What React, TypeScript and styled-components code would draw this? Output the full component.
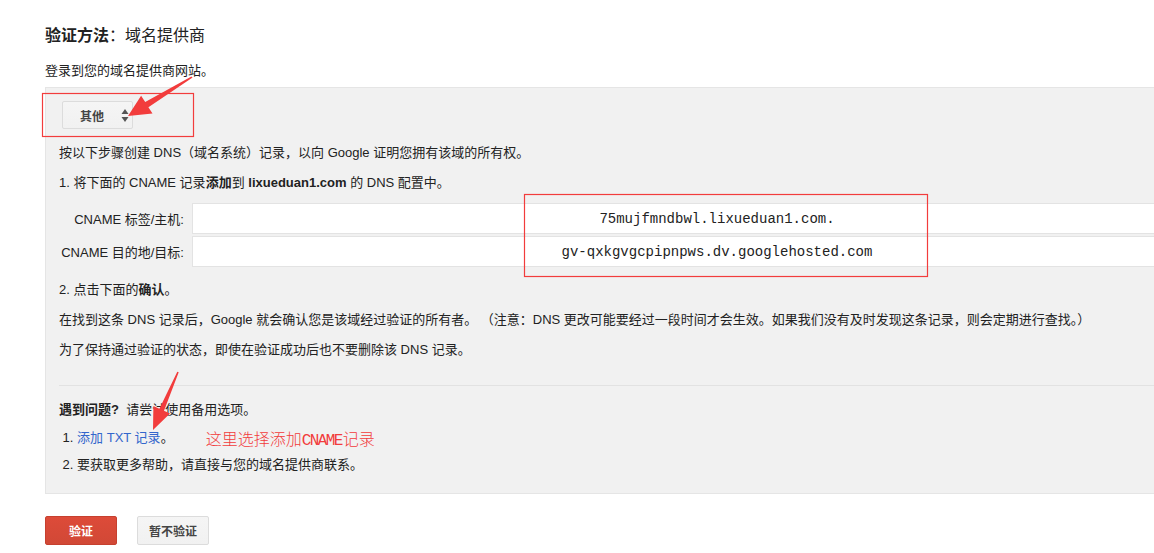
import React from "react";
import styled, { createGlobalStyle } from "styled-components";

const GlobalStyle = createGlobalStyle`
  html, body {
    margin: 0;
    padding: 0;
    background: #fff;
    overflow: hidden;
  }
  body {
    font-family: "Liberation Sans", "Noto Sans CJK SC", Arial, sans-serif;
    color: #222;
    font-size: 13px;
  }
`;

const Page = styled.div`
  position: relative;
  width: 1300px;
  padding: 26px 0 40px 45px;
  box-sizing: border-box;
`;

const Title = styled.h1`
  margin: 0;
  font-size: 16px;
  line-height: 20px;
  font-weight: normal;
  color: #222;
  strong {
    font-weight: bold;
  }
`;

const Text = styled.p<{ $mt: number }>`
  margin: ${(p) => p.$mt}px 0 0 0;
  height: 18px;
  font-size: 13px;
  line-height: 18px;
  color: #222;
  white-space: nowrap;
  b {
    font-weight: bold;
  }
`;

const Panel = styled.div`
  margin-top: 7px;
  width: 1230px;
  box-sizing: border-box;
  background: #f1f1f1;
  border: 1px solid #e5e5e5;
  padding: 13px 13px 19px 13px;
`;

const SelectButton = styled.div`
  margin-left: 3px;
  width: 71px;
  height: 28px;
  box-sizing: border-box;
  display: flex;
  align-items: center;
  padding: 0 0 0 17px;
  gap: 17px;
  border: 1px solid #dcdcdc;
  border-radius: 2px;
  background: linear-gradient(#f5f5f5, #f1f1f1);
  font-size: 12px;
  font-weight: bold;
  color: #444;
`;

const Fields = styled.div`
  margin-top: 11px;
  display: grid;
  grid-template-columns: 125px 1050px;
  column-gap: 8px;
  row-gap: 2px;
`;

const FieldLabel = styled.div`
  height: 31px;
  display: flex;
  align-items: center;
  justify-content: flex-end;
  font-size: 13px;
  white-space: nowrap;
  color: #222;
`;

const FieldValue = styled.div`
  height: 31px;
  box-sizing: border-box;
  border: 1px solid #e3e3e3;
  background: #fff;
  display: flex;
  align-items: center;
  justify-content: center;
  font-family: "Liberation Mono", "Courier New", monospace;
  font-size: 14px;
  color: #222;
`;

const Divider = styled.div`
  margin-top: 26px;
  height: 1px;
  background: #e2e2e2;
`;

const Link = styled.a`
  color: #3366cc;
  text-decoration: none;
`;

const Note = styled.span`
  display: inline-block;
  vertical-align: top;
  height: 18px;
  line-height: 18px;
  margin-left: 32px;
  font-size: 16px;
  color: #f23c3c;
  font-family: "Noto Sans CJK SC", sans-serif;
  font-weight: 300;
`;

const NoteLatin = styled.span`
  font-family: "Liberation Mono", monospace;
  font-size: 16px;
  letter-spacing: -1.6px;
  margin-right: 1px;
`;

const Actions = styled.div`
  margin-top: 22px;
  display: flex;
  gap: 20px;
`;

const Button = styled.button<{ $primary?: boolean }>`
  width: 72px;
  height: 29px;
  box-sizing: border-box;
  border-radius: 2px;
  font-family: "Liberation Sans", "Noto Sans CJK SC", sans-serif;
  font-size: 12px;
  font-weight: bold;
  cursor: pointer;
  padding: 0;
  border: 1px solid ${(p) => (p.$primary ? "#c6402f" : "#dcdcdc")};
  background: ${(p) =>
    p.$primary ? "linear-gradient(#dd4b39, #d14836)" : "linear-gradient(#f5f5f5, #f1f1f1)"};
  color: ${(p) => (p.$primary ? "#fff" : "#444")};
`;

const Overlay = styled.svg`
  position: absolute;
  top: 0;
  left: 0;
  pointer-events: none;
`;

const SelectArrows = () => (
  <svg width="8" height="13" viewBox="0 0 8 13">
    <polygon points="4,0 7.5,5 0.5,5" fill="#555" />
    <polygon points="0.5,8 7.5,8 4,13" fill="#555" />
  </svg>
);

export default function App() {
  return (
    <>
      <GlobalStyle />
      <Page>
        <Title>
          <strong>验证方法</strong>：域名提供商
        </Title>
        <Text $mt={16}>登录到您的域名提供商网站。</Text>
        <Panel>
          <SelectButton>
            <span>其他</span>
            <SelectArrows />
          </SelectButton>
          <Text $mt={15}>
            按以下步骤创建 DNS（域名系统）记录，以向 Google 证明您拥有该域的所有权。
          </Text>
          <Text $mt={12}>
            1. 将下面的 CNAME 记录<b>添加</b>到 <b>lixueduan1.com</b> 的 DNS 配置中。
          </Text>
          <Fields>
            <FieldLabel>CNAME 标签/主机:</FieldLabel>
            <FieldValue>75mujfmndbwl.lixueduan1.com.</FieldValue>
            <FieldLabel>CNAME 目的地/目标:</FieldLabel>
            <FieldValue>gv-qxkgvgcpipnpws.dv.googlehosted.com</FieldValue>
          </Fields>
          <Text $mt={14}>
            2. 点击下面的<b>确认</b>。
          </Text>
          <Text $mt={12}>
            在找到这条 DNS 记录后，Google 就会确认您是该域经过验证的所有者。 （注意：DNS
            更改可能要经过一段时间才会生效。如果我们没有及时发现这条记录，则会定期进行查找。）
          </Text>
          <Text $mt={12}>为了保持通过验证的状态，即使在验证成功后也不要删除该 DNS 记录。</Text>
          <Divider />
          <Text $mt={15}>
            <b>遇到问题?</b>&nbsp; 请尝试使用备用选项。
          </Text>
          <Text $mt={10}>
            &nbsp;1. <Link href="#">添加 TXT 记录</Link>。
            <Note>
              这里选择添加<NoteLatin>CNAME</NoteLatin>记录
            </Note>
          </Text>
          <Text $mt={9}>&nbsp;2. 要获取更多帮助，请直接与您的域名提供商联系。</Text>
        </Panel>
        <Actions>
          <Button $primary>验证</Button>
          <Button>暂不验证</Button>
        </Actions>
        <Overlay width="1154" height="553" viewBox="0 0 1154 553">
          <rect x="42.5" y="93.5" width="151" height="43" fill="none" stroke="#f23c3c" strokeWidth="1.2" />
          <rect x="524.5" y="194.5" width="403" height="82" fill="none" stroke="#f23c3c" strokeWidth="1.2" />
          <polygon
            points="192.6,77.6 148.4,107.2 152.5,113.5 128,116 141.1,95.7 145.2,102.0 191.4,76.4"
            fill="#f23c3c"
          />
          <polygon
            points="178.7,372.3 164.0,410.8 170.0,413.5 153,430 153.4,406.1 159.4,408.8 177.3,371.7"
            fill="#f23c3c"
          />
        </Overlay>
      </Page>
    </>
  );
}
